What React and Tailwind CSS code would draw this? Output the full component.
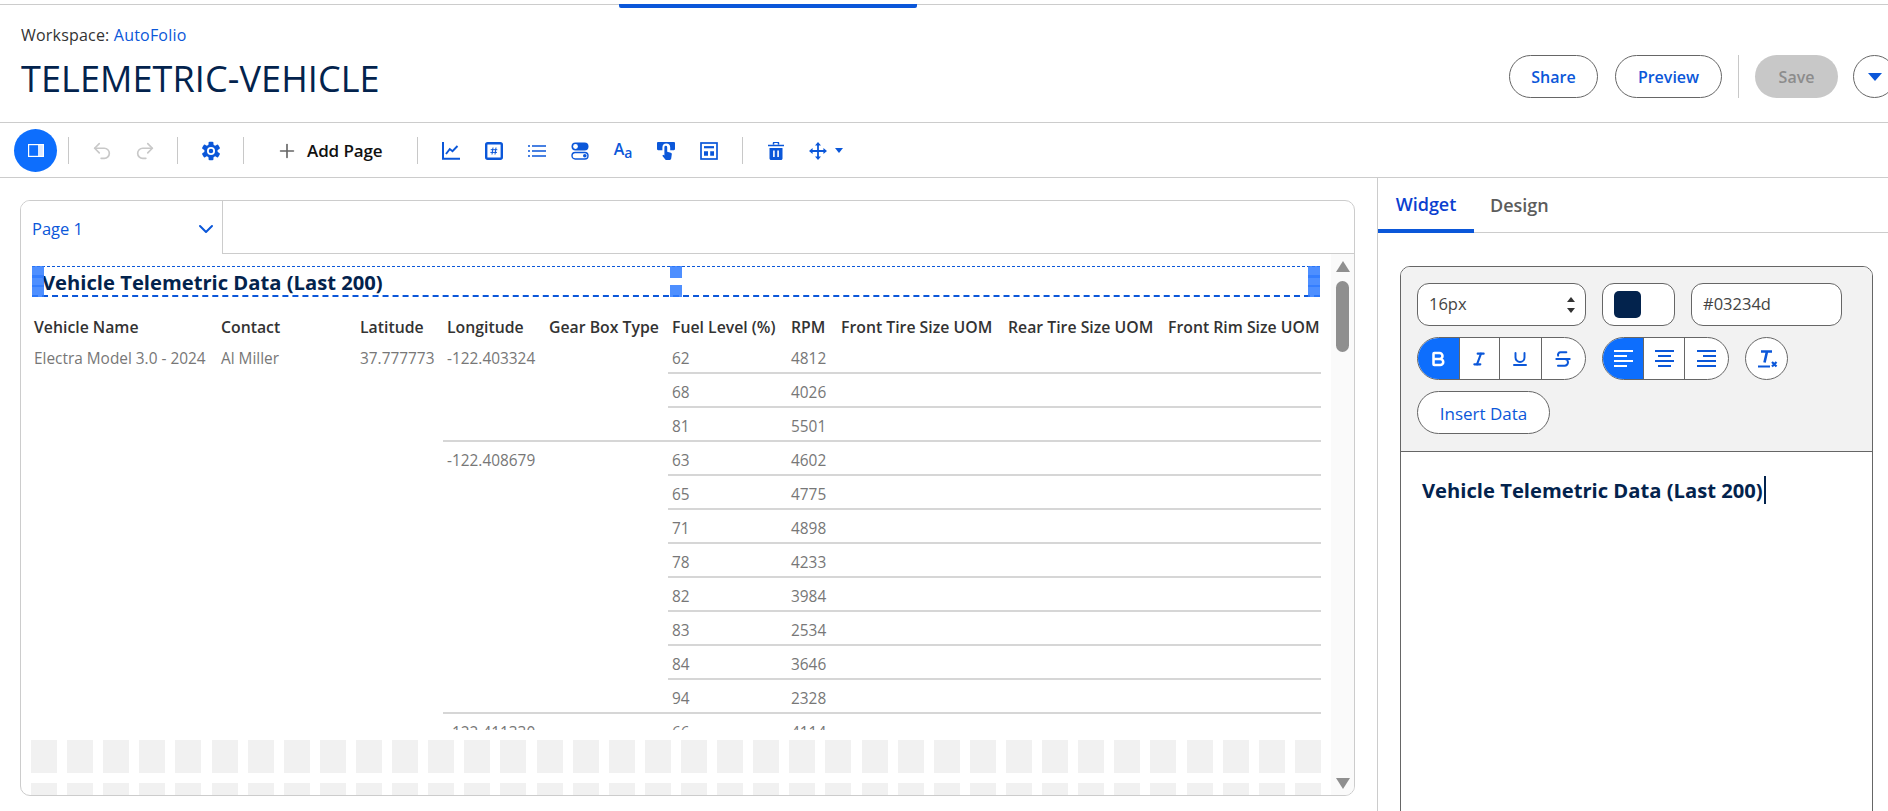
import { Bold, Italic, Underline, Strikethrough, ChevronDown, Plus, Undo2, Redo2 } from "lucide-react";

const columns = [
    { name: "Vehicle Name", w: "w-[187px]" },
    { name: "Contact", w: "w-[139px]" },
    { name: "Latitude", w: "w-[87px]" },
    { name: "Longitude", w: "w-[102px]" },
    { name: "Gear Box Type", w: "w-[123px]" },
    { name: "Fuel Level (%)", w: "w-[119px]" },
    { name: "RPM", w: "w-[50px]" },
    { name: "Front Tire Size UOM", w: "w-[167px]" },
    { name: "Rear Tire Size UOM", w: "w-[160px]" },
    { name: "Front Rim Size UOM", w: "w-[157px]" },
];

const groups = [
    { lon: "-122.403324", rows: [[62, 4812], [68, 4026], [81, 5501]] },
    { lon: "-122.408679", rows: [[63, 4602], [65, 4775], [71, 4898], [78, 4233], [82, 3984], [83, 2534], [84, 3646], [94, 2328]] },
    { lon: "-122.411330", rows: [[66, 4114]] },
];

const cell = "align-top pl-[4px] pt-[9px] h-[34px] whitespace-nowrap overflow-hidden";
const line = "border-b-2 border-[#d6d6d6]";

function Divider({ className = "" }) {
    return <div className={"w-px h-[27px] bg-[#c8c8c8] " + className} />;
}

function Pill({ children, className = "" }) {
    return (
        <button className={"h-[43px] rounded-full border border-[#666] bg-white text-[#0b57d9] text-[16px] font-semibold flex items-center justify-center " + className}>
            {children}
        </button>
    );
}

function Svg({ children, className = "" }) {
    return <svg viewBox="0 0 18 18" className={"w-[18px] h-[18px] " + className} fill="none" stroke="#0b57d9" strokeWidth="2">{children}</svg>;
}

function Toolbar() {
    return (
        <div className="h-[55px] pt-px border-b border-[#ccc] flex items-center pl-[14px]">
            <button className="w-[43px] h-[43px] rounded-full bg-[#0d6efd] flex items-center justify-center">
                <svg viewBox="0 0 16 13" className="w-[16px] h-[13px]">
                    <rect x="10" y="1" width="5" height="11" fill="#dce9ff" />
                    <rect x="0.6" y="0.6" width="14.8" height="11.8" fill="none" stroke="#fff" strokeWidth="1.2" />
                </svg>
            </button>
            <Divider className="ml-[11px]" />
            <Undo2 size={22} color="#c8c8c8" strokeWidth={1.8} className="ml-[22px]" />
            <Redo2 size={22} color="#c8c8c8" strokeWidth={1.8} className="ml-[21px]" />
            <Divider className="ml-[21px]" />
            <svg viewBox="0 0 18 18" className="ml-[23px] w-[20px] h-[20px]">
                {[0, 60, 120, 180, 240, 300].map((a) => (
                    <rect key={a} x="6.8" y="0.6" width="4.4" height="5" rx="1" fill="#0b57d9" transform={`rotate(${a} 9 9)`} />
                ))}
                <circle cx="9" cy="9" r="6" fill="#0b57d9" />
                <circle cx="9" cy="9" r="3.6" fill="#fff" />
                <circle cx="9" cy="9" r="2" fill="#0b57d9" />
            </svg>
            <Divider className="ml-[22px]" />
            <Plus size={22} color="#666" strokeWidth={1.8} className="ml-[32px]" />
            <span className="ml-[9px] w-[77px] whitespace-nowrap text-[17px] font-semibold tracking-[-0.1px] text-[#111]">Add Page</span>
            <Divider className="ml-[33px]" />
            <div className="flex items-center gap-[25px] ml-[24px]">
                <Svg>
                    <path d="M1 0v16.8h17" />
                    <path d="M4 12l3.8-5 2.7 2.2L15.5 4" strokeWidth="1.9" />
                </Svg>
                <Svg>
                    <rect x="1.2" y="1.2" width="15.6" height="15.6" rx="1.5" strokeWidth="2.4" />
                    <path d="M8 5.5l-1 7M11 5.5l-1 7M5.7 7.7h6.6M5.4 10.4h6.6" strokeWidth="1" />
                </Svg>
                <Svg>
                    <path d="M0 4h2M0 9h2M0 14h2M4 4h14M4 9h14M4 14h14" strokeWidth="1.7" />
                </Svg>
                <svg viewBox="0 0 18 18" className="w-[18px] h-[18px]">
                    <rect x="0.5" y="0.5" width="17" height="8" rx="4" fill="#0b57d9" />
                    <circle cx="4.5" cy="4.5" r="2.4" fill="#fff" />
                    <rect x="1" y="10.5" width="16" height="6.5" rx="3.2" fill="none" stroke="#0b57d9" strokeWidth="1.4" />
                    <circle cx="13.8" cy="13.7" r="1.8" fill="#0b57d9" />
                </svg>
                <span className="w-[18px] h-[18px] flex items-end justify-center text-[#0b57d9] font-semibold leading-none">
                    <span className="text-[16px] self-start -mt-[1px]">A</span>
                    <span className="text-[14px]">a</span>
                </span>
                <svg viewBox="0 0 18 18" className="w-[18px] h-[18px]">
                    <path d="M0 1.2C0 .5.5 0 1.2 0h15.6c.7 0 1.2.5 1.2 1.2V7c0 .7-.5 1.2-1.2 1.2h-3.6V5.4a3.9 3.9 0 0 0-7.8 0v2.8H1.2C.5 8.2 0 7.7 0 7z" fill="#0b57d9" />
                    <path d="M7.4 5.2a1.4 1.4 0 0 1 2.8 0v4.6l3.6.9c.7.2 1.1.8 1 1.5l-.6 4.4c-.1.7-.7 1.4-1.4 1.4H9.5c-.5 0-.9-.2-1.2-.6l-3-3.6 1-1 1.1.6z" fill="#0b57d9" />
                </svg>
                <Svg>
                    <rect x="1" y="1" width="16" height="16" strokeWidth="1.7" />
                    <path d="M4 5.2h10" strokeWidth="2.2" />
                    <path d="M4 11.5h4M10.2 11.5h3.8" strokeWidth="4.4" />
                </Svg>
            </div>
            <Divider className="ml-[24px]" />
            <svg viewBox="0 0 16 18" className="ml-[25px] w-[16px] h-[18px]">
                <path d="M5.5 2.6V1.2C5.5.6 6 .2 6.5.2h3c.6 0 1 .4 1 1v1.4M0 3.5h16" fill="none" stroke="#0b57d9" strokeWidth="1.5" />
                <path d="M1.5 6h13v10.5c0 .8-.7 1.5-1.5 1.5H3c-.8 0-1.5-.7-1.5-1.5z" fill="#0b57d9" />
                <path d="M5.9 8.5v6.5M10.1 8.5v6.5" stroke="#fff" strokeWidth="1.6" />
            </svg>
            <svg viewBox="0 0 18 18" className="ml-[25px] w-[18px] h-[18px]" fill="#0b57d9" stroke="#0b57d9">
                <path d="M9 2v14M2 9h14" strokeWidth="1.8" />
                <path d="M9 0l3 3.6H6zM9 18l-3-3.6h6zM0 9l3.6-3v6zM18 9l-3.6 3V6z" stroke="none" />
            </svg>
            <div className="ml-[8px] w-0 h-0 border-x-[4px] border-x-transparent border-t-[5px] border-t-[#0b57d9]" />
        </div>
    );
}

function Handle({ className }) {
    return <div className={"absolute w-[12px] h-[12px] bg-[#2f7bff]/85 " + className} />;
}

function DataTable() {
    return (
        <div className="mt-[9px] ml-[9px] h-[424px] overflow-hidden">
            <table className="table-fixed border-separate border-spacing-0 w-[1291px] text-[15.4px] leading-[20px]">
                <colgroup>
                    {columns.map((c) => <col key={c.name} className={c.w} />)}
                </colgroup>
                <thead>
                    <tr>
                        {columns.map((c) => (
                            <th key={c.name} className={cell + " !pt-[11px] text-[15.8px] text-left font-semibold text-[#333]"}>{c.name}</th>
                        ))}
                    </tr>
                </thead>
                <tbody className="text-[#777]">
                    {groups.map((g, gi) =>
                        g.rows.map((r, ri) => {
                            return (
                                <tr key={r[0]}>
                                    {gi === 0 && ri === 0 && (
                                        <>
                                            <td rowSpan={12} className={cell}>Electra Model 3.0 - 2024</td>
                                            <td rowSpan={12} className={cell}>Al Miller</td>
                                            <td rowSpan={12} className={cell}>37.777773</td>
                                        </>
                                    )}
                                    {ri === 0 && (
                                        <>
                                            <td rowSpan={g.rows.length} className={cell + (gi < 2 ? " " + line : "")}>{g.lon}</td>
                                            <td rowSpan={g.rows.length} className={cell + (gi < 2 ? " " + line : "")} />
                                        </>
                                    )}
                                    {[r[0], r[1], "", "", ""].map((v, i) => (
                                        <td key={i} className={cell + (gi < 2 ? " " + line : "")}>{v}</td>
                                    ))}
                                </tr>
                            );
                        })
                    )}
                </tbody>
            </table>
        </div>
    );
}

function SkeletonRow({ className }) {
    return (
        <div className={"ml-[10px] w-[1290px] flex justify-between shrink-0 " + className}>
            {Array.from({ length: 36 }).map((_, i) => <div key={i} className="w-[26px] bg-[#f1f1f1]" />)}
        </div>
    );
}

function Canvas() {
    return (
        <div className="ml-[20px] mt-[22px] w-[1335px] h-[596px] border border-[#ccc] rounded-[10px] overflow-hidden flex flex-col">
            <div className="h-[53px] flex shrink-0 border-b border-[#ccc]">
                <div className="w-[202px] -mb-px h-[53px] bg-white border-r border-[#ccc] flex items-center justify-between pl-[11px] pr-[4px] text-[#0b57d9] text-[16.5px]">
                    <span className="font-medium mt-[3px]">Page 1</span>
                    <ChevronDown size={24} strokeWidth={2} className="mt-[3px]" />
                </div>
            </div>
            <div className="flex flex-1 min-h-0">
                <div className="w-[1310px] overflow-hidden">
                    <div className="relative mt-[12px] ml-[11px] w-[1288px] h-[31px] border-t border-dashed border-[#0b57d9] border-b-2 pl-[10px] pt-[3px] flex items-center">
                        <span className="text-[20.2px] font-bold text-[#03234d] leading-none">Vehicle Telemetric Data (Last 200)</span>
                        <Handle className="left-0 -top-px" />
                        <Handle className="left-0 top-[8px]" />
                        <Handle className="left-0 bottom-[-2px]" />
                        <Handle className="left-[638px] -top-px" />
                        <Handle className="left-[638px] bottom-[-2px]" />
                        <Handle className="right-0 -top-px" />
                        <Handle className="right-0 top-[8px]" />
                        <Handle className="right-0 bottom-[-2px]" />
                    </div>
                    <DataTable />
                    <SkeletonRow className="mt-[10px] h-[33px]" />
                    <SkeletonRow className="mt-[10px] h-[33px]" />
                </div>
                <div className="w-[23px] bg-[#fafafa] flex flex-col items-center">
                    <div className="mt-[7px] w-0 h-0 border-x-[7px] border-x-transparent border-b-[11px] border-b-[#8f8f8f]" />
                    <div className="mt-[9px] w-[13px] h-[71px] rounded-full bg-[#8f8f8f]" />
                    <div className="mt-auto mb-[6px] w-0 h-0 border-x-[7px] border-x-transparent border-t-[11px] border-t-[#8f8f8f]" />
                </div>
            </div>
        </div>
    );
}

function Segment({ children, active, className = "" }) {
    return (
        <div className={"h-full flex items-center justify-center " + (active ? "bg-[#0d6efd] " : "") + className}>
            {children}
        </div>
    );
}

function Line4({ widths, align }) {
    return (
        <div className={"w-[19px] flex flex-col gap-[3px] " + align}>
            {widths.map((w, i) => <div key={i} className={"h-[2px] bg-current " + w} />)}
        </div>
    );
}

function Editor() {
    return (
        <div className="mt-[33px] ml-[22px] w-[473px] h-[600px] border border-[#666] rounded-t-[10px] overflow-hidden">
            <div className="h-[185px] bg-[#f2f2f2] border-b border-[#666] pt-[16px] pl-[16px]">
                <div className="flex items-center">
                    <div className="w-[169px] h-[43px] rounded-[12px] border border-[#666] bg-white flex items-center justify-between pl-[11px] pr-[10px] text-[16.5px] text-[#444]">
                        16px
                        <span className="flex flex-col gap-[6px]">
                            <span className="w-0 h-0 border-x-[4px] border-x-transparent border-b-[5px] border-b-[#333]" />
                            <span className="w-0 h-0 border-x-[4px] border-x-transparent border-t-[5px] border-t-[#333]" />
                        </span>
                    </div>
                    <div className="ml-[16px] w-[73px] h-[43px] rounded-[12px] border border-[#666] bg-white flex items-center pl-[11px]">
                        <div className="w-[27px] h-[27px] rounded-[5px] bg-[#03234d]" />
                    </div>
                    <div className="ml-[16px] w-[151px] h-[43px] rounded-[12px] border border-[#666] bg-white flex items-center pl-[11px] text-[16.5px] text-[#444]">
                        #03234d
                    </div>
                </div>
                <div className="flex items-center mt-[11px] h-[43px] text-[#0b57d9]">
                    <div className="w-[169px] h-full rounded-full border border-[#666] bg-white overflow-hidden flex divide-x divide-[#666]">
                        <Segment active className="w-[42px]"><Bold size={18} strokeWidth={3.4} color="#fff" /></Segment>
                        <Segment className="w-[41px]"><Italic size={16} strokeWidth={3.2} /></Segment>
                        <Segment className="w-[42px]"><Underline size={18} strokeWidth={2.6} /></Segment>
                        <Segment className="w-[44px]"><Strikethrough size={20} strokeWidth={2.4} /></Segment>
                    </div>
                    <div className="ml-[16px] w-[127px] h-full rounded-full border border-[#666] bg-white overflow-hidden flex divide-x divide-[#666]">
                        <Segment active className="w-[42px] text-white"><Line4 widths={["w-full", "w-[13px]", "w-full", "w-[13px]"]} align="items-start" /></Segment>
                        <Segment className="w-[41px]"><Line4 widths={["w-full", "w-[13px]", "w-full", "w-[13px]"]} align="items-center" /></Segment>
                        <Segment className="w-[44px]"><Line4 widths={["w-full", "w-[13px]", "w-full", "w-full"]} align="items-end" /></Segment>
                    </div>
                    <div className="ml-[16px] w-[43px] h-full rounded-full border border-[#666] bg-white flex items-center justify-center">
                        <svg viewBox="0 0 22 20" className="w-[22px] h-[21px]" fill="none" stroke="#0b57d9">
                            <path d="M5 3h11M11 3L8.5 14" strokeWidth="2.6" />
                            <path d="M2 18h12" strokeWidth="2.2" />
                            <path d="M16 13.5l4.5 4.5M20.5 13.5L16 18" strokeWidth="2.2" />
                        </svg>
                    </div>
                </div>
                <Pill className="mt-[11px] w-[133px] !text-[17px] !font-medium">
                    <span className="mt-[2px]">Insert Data</span>
                </Pill>
            </div>
            <div className="pt-[24px] pl-[21px] flex items-center">
                <span className="text-[20.2px] font-bold text-[#03234d] leading-[28px]">Vehicle Telemetric Data (Last 200)</span>
                <div className="ml-[1px] w-[2px] h-[28px] bg-[#03234d]" />
            </div>
        </div>
    );
}

export default function App() {
    return (
        <div className="relative w-[1888px] h-[811px] overflow-hidden bg-white font-['Open_Sans',sans-serif]">
            <div className="absolute left-[619px] top-[4px] w-[298px] h-[4px] bg-[#0b57d9] rounded-b-[2px]" />
            <div className="mt-[4px] h-[119px] border-y border-[#ccc] flex justify-between">
                <div className="pl-[21px]">
                    <div className="mt-[20px] text-[16px] leading-[20px] tracking-[0.2px] text-[#333]">
                        Workspace: <span className="text-[#0b57d9]">AutoFolio</span>
                    </div>
                    <h1 className="mt-[11px] text-[36px] leading-[46px] tracking-[0.1px] text-[#03234d]">TELEMETRIC-VEHICLE</h1>
                </div>
                <div className="flex items-start shrink-0 mr-[-8px] pt-[50px]">
                    <Pill className="w-[89px]">Share</Pill>
                    <Pill className="ml-[17px] w-[107px]">Preview</Pill>
                    <div className="ml-[16px] w-px h-[43px] bg-[#c8c8c8]" />
                    <button className="ml-[16px] w-[83px] h-[43px] rounded-full bg-[#c8c8c8] text-[#8c8c8c] text-[16px] font-semibold">Save</button>
                    <button className="ml-[15px] w-[43px] h-[43px] shrink-0 rounded-full border border-[#666] flex items-center justify-center">
                        <span className="w-0 h-0 border-x-[7px] border-x-transparent border-t-[8px] border-t-[#0b57d9]" />
                    </button>
                </div>
            </div>
            <Toolbar />
            <div className="flex h-[634px]">
                <div className="w-[1377px] shrink-0"><Canvas /></div>
                <div className="flex-1 border-l border-[#ccc]">
                    <div className="h-[55px] border-b border-[#ccc] flex items-end">
                        <div className="w-[96px] h-[55px] -mb-px border-b-4 border-[#0b57d9] pt-[2px] flex items-center justify-center text-[18px] font-semibold text-[#0b3fd0]">Widget</div>
                        <div className="ml-[16px] h-[54px] pt-[1px] flex items-center text-[18px] font-semibold text-[#5c5c5c]">Design</div>
                    </div>
                    <Editor />
                </div>
            </div>
        </div>
    );
}
